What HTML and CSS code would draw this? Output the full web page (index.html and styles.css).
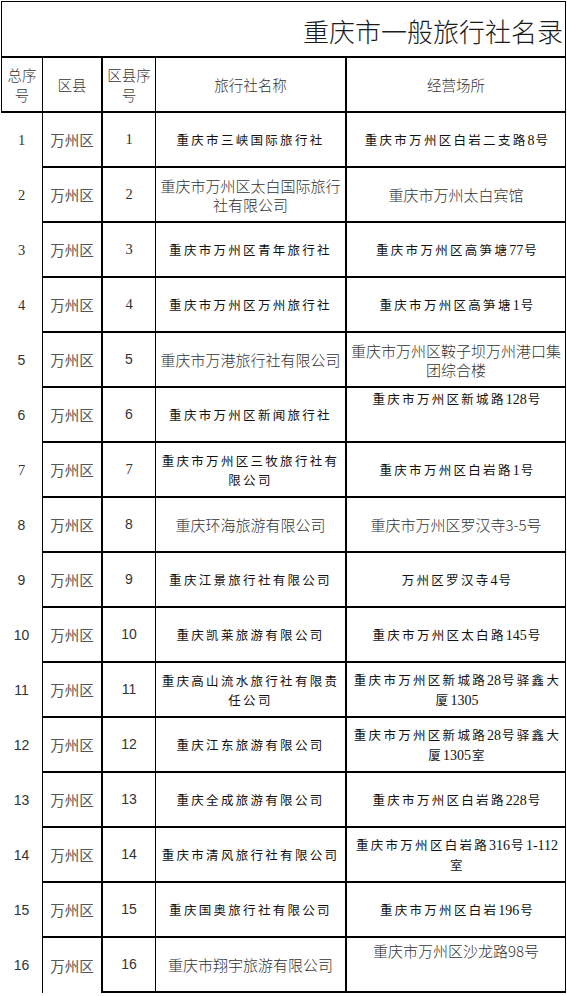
FILE: index.html
```html
<!DOCTYPE html>
<html lang="zh-CN">
<head>
<meta charset="utf-8">
<title>重庆市一般旅行社名录</title>
<link rel="stylesheet" href="styles.css">
</head>
<body>
<div class="sheet">
  <div class="title"><span class="title-text">重庆市一般旅行社名录</span></div>

  <div class="cell c1 hd">总序<br>号</div>
  <div class="cell c2 hd">区县</div>
  <div class="cell c3 hd">区县序<br>号</div>
  <div class="cell c4 hd">旅行社名称</div>
  <div class="cell c5 hd">经营场所</div>

  <div class="cell c1 ns">1</div><div class="cell c2 dist">万州区</div><div class="cell c3 ns">1</div>
  <div class="cell c4 sp">重庆市三峡国际旅行社</div><div class="cell c5 sp"><span>重庆市万州区白岩二支路<span class="d">8</span>号</span></div>

  <div class="cell c1 ns">2</div><div class="cell c2 dist">万州区</div><div class="cell c3 ns">2</div>
  <div class="cell c4 nm">重庆市万州区太白国际旅行社有限公司</div><div class="cell c5 nm">重庆市万州太白宾馆</div>

  <div class="cell c1 ns">3</div><div class="cell c2 dist">万州区</div><div class="cell c3 ns">3</div>
  <div class="cell c4 sp">重庆市万州区青年旅行社</div><div class="cell c5 sp"><span>重庆市万州区高笋塘<span class="d">77</span>号</span></div>

  <div class="cell c1 ns">4</div><div class="cell c2 dist">万州区</div><div class="cell c3 ns">4</div>
  <div class="cell c4 sp">重庆市万州区万州旅行社</div><div class="cell c5 sp"><span>重庆市万州区高笋塘<span class="d">1</span>号</span></div>

  <div class="cell c1 n">5</div><div class="cell c2 dist">万州区</div><div class="cell c3 n">5</div>
  <div class="cell c4 nm">重庆市万港旅行社有限公司</div><div class="cell c5 nm">重庆市万州区鞍子坝万州港口集团综合楼</div>

  <div class="cell c1 n">6</div><div class="cell c2 dist">万州区</div><div class="cell c3 n">6</div>
  <div class="cell c4 sp">重庆市万州区新闻旅行社</div><div class="cell c5 sp top"><span>重庆市万州区新城路<span class="d">128</span>号</span></div>

  <div class="cell c1 ns">7</div><div class="cell c2 dist">万州区</div><div class="cell c3 ns">7</div>
  <div class="cell c4 sp">重庆市万州区三牧旅行社有限公司</div><div class="cell c5 sp"><span>重庆市万州区白岩路<span class="d">1</span>号</span></div>

  <div class="cell c1 n">8</div><div class="cell c2 dist">万州区</div><div class="cell c3 n">8</div>
  <div class="cell c4 nm">重庆环海旅游有限公司</div><div class="cell c5 nm">重庆市万州区罗汉寺3-5号</div>

  <div class="cell c1 n">9</div><div class="cell c2 dist">万州区</div><div class="cell c3 n">9</div>
  <div class="cell c4 sp">重庆江景旅行社有限公司</div><div class="cell c5 sp"><span>万州区罗汉寺<span class="d">4</span>号</span></div>

  <div class="cell c1 n">10</div><div class="cell c2 dist">万州区</div><div class="cell c3 n">10</div>
  <div class="cell c4 sp">重庆凯莱旅游有限公司</div><div class="cell c5 sp"><span>重庆市万州区太白路<span class="d">145</span>号</span></div>

  <div class="cell c1 n">11</div><div class="cell c2 dist">万州区</div><div class="cell c3 n">11</div>
  <div class="cell c4 sp">重庆高山流水旅行社有限责任公司</div><div class="cell c5 sp"><span>重庆市万州区新城路<span class="d">28</span>号驿鑫大<br>厦<span class="d">1305</span></span></div>

  <div class="cell c1 n">12</div><div class="cell c2 dist">万州区</div><div class="cell c3 n">12</div>
  <div class="cell c4 sp">重庆江东旅游有限公司</div><div class="cell c5 sp"><span>重庆市万州区新城路<span class="d">28</span>号驿鑫大<br>厦<span class="d">1305</span>室</span></div>

  <div class="cell c1 n">13</div><div class="cell c2 dist">万州区</div><div class="cell c3 n">13</div>
  <div class="cell c4 sp">重庆全成旅游有限公司</div><div class="cell c5 sp"><span>重庆市万州区白岩路<span class="d">228</span>号</span></div>

  <div class="cell c1 n">14</div><div class="cell c2 dist">万州区</div><div class="cell c3 n">14</div>
  <div class="cell c4 sp">重庆市清风旅行社有限公司</div><div class="cell c5 sp"><span>重庆市万州区白岩路<span class="d">316</span>号<span class="d">1-112</span><br>室</span></div>

  <div class="cell c1 n">15</div><div class="cell c2 dist">万州区</div><div class="cell c3 n">15</div>
  <div class="cell c4 sp">重庆国奥旅行社有限公司</div><div class="cell c5 sp"><span>重庆市万州区白岩<span class="d">196</span>号</span></div>

  <div class="cell c1 n">16</div><div class="cell c2 dist last">万州区</div><div class="cell c3 n">16</div>
  <div class="cell c4 nm">重庆市翔宇旅游有限公司</div><div class="cell c5 nm top low">重庆市万州区沙龙路98号</div>
</div>
</body>
</html>
```

FILE: styles.css
```css
html, body {
  margin: 0;
  padding: 0;
  background: #ffffff;
}

body {
  font-family: "Noto Sans CJK SC", "Noto Sans", sans-serif;
  color: #222;
}

.sheet {
  display: grid;
  grid-template-columns: 41px 59px 54px 190px 221px;
  grid-template-rows: 57px 55px;
  grid-auto-rows: 55px;
  margin: 1px 0 0 1px;
  width: 565px;
}

.title {
  grid-column: 1 / -1;
  box-sizing: border-box;
  border: 1px solid #000;
  border-bottom-width: 2px;
  overflow: hidden;
  white-space: nowrap;
  padding: 16px 0 0 301px;
}

.title-text {
  display: block;
  font-size: 26px;
  line-height: 26px;
  font-weight: 300;
  color: #1a1a1a;
}

.cell {
  box-sizing: border-box;
  display: flex;
  align-items: center;
  justify-content: center;
  text-align: center;
  overflow: hidden;
  font-size: 15px;
  line-height: 19px;
}

.hd {
  border-bottom: 2px solid #000;
  font-size: 14.5px;
  line-height: 20px;
  font-weight: 300;
  color: #333;
}

.c1.hd {
  border-left: 1px solid #000;
}

.c2 {
  border-left: 1px solid #000;
  border-bottom: 2px solid #000;
}

.c2.last {
  border-bottom: none;
}

.c3 {
  border-left: 2px solid #000;
  border-bottom: 2px solid #000;
}

.c4 {
  border-left: 1px solid #000;
  border-bottom: 2px solid #000;
  padding: 0 4px;
}

.c5 {
  border-left: 2px solid #000;
  border-right: 1px solid #000;
  border-bottom: 2px solid #000;
  padding: 0 2px;
}

.n {
  font-family: "Liberation Sans", Arial, sans-serif;
  font-size: 14px;
  color: #333;
}

.ns {
  font-family: "Liberation Serif", "Times New Roman", serif;
  font-size: 14.5px;
  color: #333;
}

.dist {
  font-size: 14.5px;
  font-weight: 400;
  color: #555;
}

.nm {
  font-size: 15px;
  font-weight: 300;
  color: #333;
}

.sp {
  font-size: 12.5px;
  letter-spacing: 2.3px;
  padding-left: 4px;
  color: #111;
}

.c5.sp {
  padding-left: 3px;
  padding-right: 0;
}

.d {
  display: inline-block;
  font-family: "Liberation Serif", "Times New Roman", serif;
  font-size: 14px;
  line-height: 19px;
  letter-spacing: 0;
  margin-right: 1px;
}

.top {
  align-items: flex-start;
  padding-top: 1px;
}

.low {
  padding-top: 3px;
}
```
